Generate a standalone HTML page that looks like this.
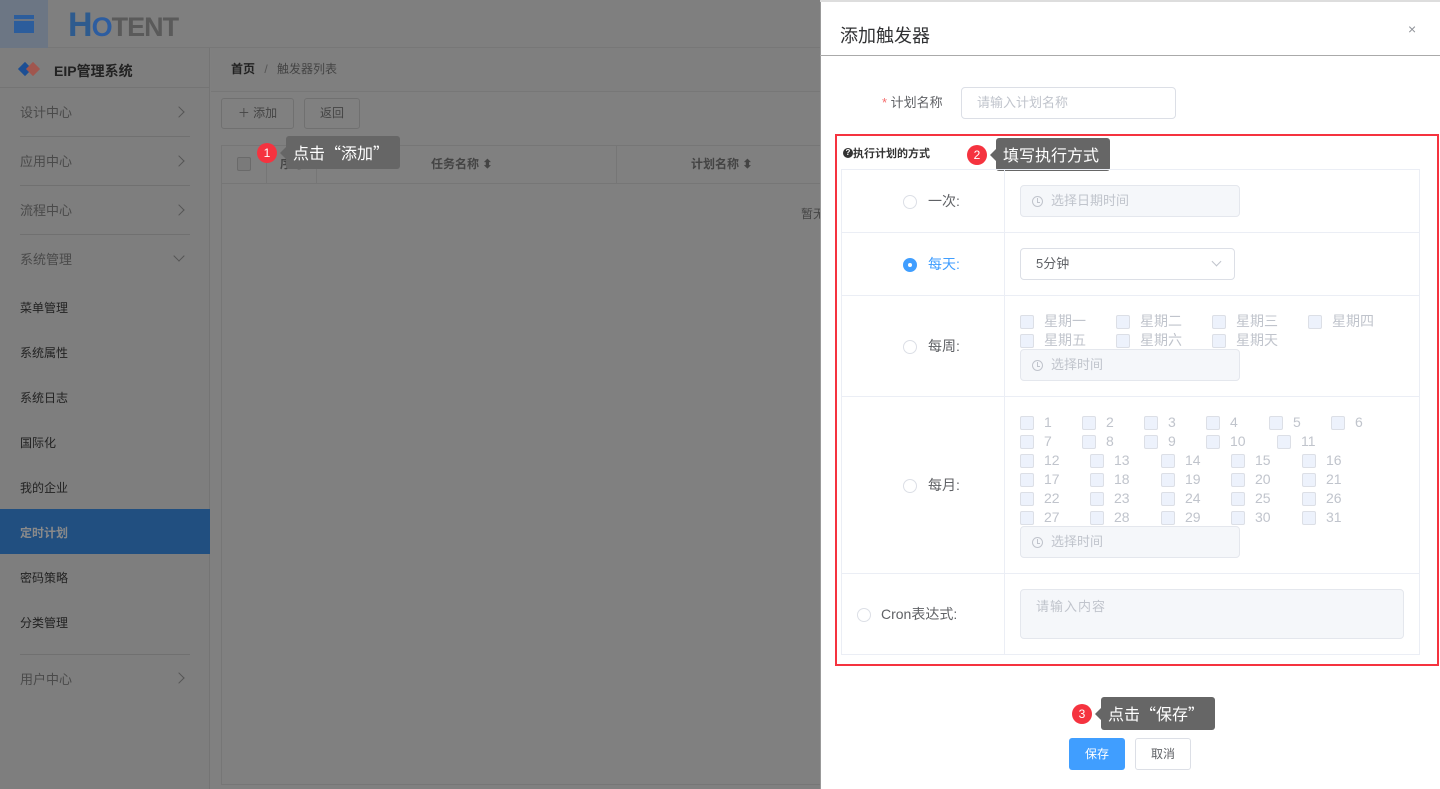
<!DOCTYPE html><html><head><meta charset="utf-8"><style>
*{box-sizing:border-box;margin:0;padding:0}
body{width:1440px;height:789px;overflow:hidden;position:relative;font-family:"Liberation Sans","Noto Sans CJK SC",sans-serif;font-size:13px;background:#808080;color:#333}
.a{position:absolute}
.mi{position:absolute;left:20px;font-size:13px;color:#4a4a4a}
.sub{position:absolute;left:20px;font-size:12px;color:#222}
.ln{position:absolute;left:20px;width:170px;height:1px;background:#707070}
.chev{position:absolute;left:175px;width:8px;height:8px;border-right:1.5px solid #555;border-top:1.5px solid #555;transform:rotate(45deg)}
.tip{position:absolute;background:#666;color:#fff;font-size:16px;border-radius:3px;padding:0 7px;line-height:33px;height:33px;font-family:"Noto Sans CJK SC",sans-serif;white-space:nowrap}
.tip:before{content:"";position:absolute;left:-6px;top:11px;border-right:6px solid #666;border-top:6px solid transparent;border-bottom:6px solid transparent}
.dot{position:absolute;width:20px;height:20px;border-radius:50%;background:#f5333f;color:#fff;font-size:12px;text-align:center;line-height:20px}
.radio{position:absolute;width:14px;height:14px;border-radius:50%;border:1px solid #dcdfe6;background:#fff}
.lbl{position:absolute;font-size:14px;color:#606266}
.inp{position:absolute;border:1px solid #e4e7ed;background:#f5f7fa;border-radius:4px;color:#c0c4cc;font-size:13px;padding-left:30px;line-height:30px;height:32px}
.inp .clk{position:absolute;left:11px;top:10px;width:11px;height:11px;border:1px solid #c0c4cc;border-radius:50%}
.inp .clk:after{content:"";position:absolute;left:4px;top:1px;width:2px;height:4px;border-left:1px solid #c0c4cc;border-bottom:1px solid #c0c4cc}
.cb{position:absolute;width:14px;height:14px;border:1px solid #dcdfe6;background:#edf2fc;border-radius:2px}
.ct{position:absolute;font-size:14px;color:#c0c4cc}
.hl{position:absolute;left:841px;width:579px;height:1px;background:#ebeef5}
</style></head><body>
<div class="a" style="left:0;top:0;width:820px;height:48px;background:#7f7f7f;border-bottom:1px solid #777"></div>
<div class="a" style="left:0;top:0;width:48px;height:48px;background:#6c7684"></div>
<div class="a" style="left:14px;top:15px;width:20px;height:18px;background:#2c5d9c;border-top:4px solid #2c5d9c"></div>
<div class="a" style="left:14px;top:19px;width:20px;height:2px;background:#6c7684"></div>
<div class="a" style="left:68px;top:6px;font-size:34px;font-weight:bold;color:#2e5b8e;letter-spacing:-1px">H<span style="font-size:27px;color:#2d5da0">O</span><span style="font-size:27px;color:#5a5a5a">TENT</span></div>
<div class="a" style="left:0;top:48px;width:210px;height:741px;background:#7e7e7e;border-right:1px solid #747474"></div>
<div class="a" style="left:0;top:48px;width:210px;height:40px;border-bottom:1px solid #747474"></div>
<div class="a" style="left:20px;top:64px;width:10px;height:10px;background:#1d4f94;transform:rotate(45deg)"></div>
<div class="a" style="left:28px;top:64px;width:10px;height:10px;background:#a0564e;transform:rotate(45deg)"></div>
<div class="a" style="left:54px;top:61px;font-size:14px;font-weight:bold;color:#222">EIP管理系统</div>
<div class="mi" style="top:102px">设计中心</div><div class="chev" style="top:108px"></div><div class="ln" style="top:136px"></div>
<div class="mi" style="top:151px">应用中心</div><div class="chev" style="top:157px"></div><div class="ln" style="top:185px"></div>
<div class="mi" style="top:200px">流程中心</div><div class="chev" style="top:206px"></div><div class="ln" style="top:234px"></div>
<div class="mi" style="top:249px">系统管理</div><div class="chev" style="top:252px;transform:rotate(135deg)"></div>
<div class="sub" style="top:299px">菜单管理</div>
<div class="sub" style="top:344px">系统属性</div>
<div class="sub" style="top:389px">系统日志</div>
<div class="sub" style="top:434px">国际化</div>
<div class="sub" style="top:479px">我的企业</div>
<div class="a" style="left:0;top:509px;width:210px;height:45px;background:#214f80"></div>
<div class="sub" style="top:524px;color:#8a8a8a;font-weight:bold">定时计划</div>
<div class="sub" style="top:569px">密码策略</div>
<div class="sub" style="top:614px">分类管理</div>
<div class="ln" style="top:654px"></div>
<div class="mi" style="top:669px">用户中心</div><div class="chev" style="top:674px"></div>
<div class="a" style="left:211px;top:48px;width:609px;height:44px;background:#7f7f7f;border-bottom:1px solid #777"></div>
<div class="a" style="left:231px;top:60px;font-size:12px;color:#222;font-weight:bold">首页 <span style="color:#555;font-weight:normal;margin:0 6px">/</span> <span style="font-weight:normal;color:#444">触发器列表</span></div>
<div class="a" style="left:221px;top:98px;width:73px;height:31px;border:1px solid #707070;border-radius:3px;color:#444;font-size:12px;line-height:29px;text-align:center">＋ 添加</div>
<div class="a" style="left:304px;top:98px;width:56px;height:31px;border:1px solid #707070;border-radius:3px;color:#444;font-size:12px;line-height:29px;text-align:center">返回</div>
<div class="a" style="left:221px;top:145px;width:600px;height:640px;border:1px solid #767676;border-right:none"></div>
<div class="a" style="left:221px;top:183px;width:600px;height:1px;background:#767676"></div>
<div class="a" style="left:266px;top:145px;width:1px;height:38px;background:#767676"></div>
<div class="a" style="left:316px;top:145px;width:1px;height:38px;background:#767676"></div>
<div class="a" style="left:616px;top:145px;width:1px;height:38px;background:#767676"></div>
<div class="a" style="left:237px;top:157px;width:14px;height:14px;border:1px solid #6a6a6a;background:#7a7a7a;border-radius:2px"></div>
<div class="a" style="left:280px;top:155px;font-size:12px;color:#444;font-weight:bold">序号</div>
<div class="a" style="left:431px;top:155px;font-size:12px;color:#444;font-weight:bold">任务名称 ⬍</div>
<div class="a" style="left:691px;top:155px;font-size:12px;color:#444;font-weight:bold">计划名称 ⬍</div>
<div class="a" style="left:801px;top:205px;font-size:12px;color:#444">暂无</div>
<div class="dot" style="left:257px;top:143px">1</div>
<div class="tip" style="left:286px;top:136px;width:114px">点击“添加”</div>
<div class="a" style="left:820px;top:0;width:620px;height:789px;background:#fff;border-left:1px solid #999"></div>
<div class="a" style="left:820px;top:0;width:620px;height:2px;background:#ddd"></div>
<div class="a" style="left:840px;top:22px;font-size:18px;color:#303133">添加触发器</div>
<div class="a" style="left:1408px;top:21px;font-size:14px;color:#909399">×</div>
<div class="a" style="left:820px;top:55px;width:620px;height:1px;background:#aaa"></div>
<div class="a" style="left:882px;top:92px;font-size:13px;color:#606266"><span style="color:#f56c6c">*</span> 计划名称</div>
<div class="a" style="left:961px;top:87px;width:215px;height:32px;border:1px solid #dcdfe6;border-radius:4px;color:#c0c4cc;font-size:13px;padding-left:15px;line-height:30px">请输入计划名称</div>
<div class="a" style="left:835px;top:134px;width:604px;height:532px;border:2px solid #f5333f"></div>
<div class="a" style="left:843px;top:148px;width:10px;height:10px;border-radius:50%;background:#333;color:#fff;font-size:8px;font-weight:bold;text-align:center;line-height:10px">?</div>
<div class="a" style="left:853px;top:145px;font-size:11px;font-weight:bold;color:#333">执行计划的方式</div>
<div class="dot" style="left:967px;top:145px">2</div>
<div class="tip" style="left:996px;top:138px;width:114px">填写执行方式</div>
<div class="a" style="left:841px;top:169px;width:579px;height:486px;border:1px solid #ebeef5"></div>
<div class="a" style="left:1004px;top:169px;width:1px;height:486px;background:#ebeef5"></div>
<div class="hl" style="top:232px"></div><div class="hl" style="top:295px"></div><div class="hl" style="top:396px"></div><div class="hl" style="top:573px"></div>
<div class="radio" style="left:903px;top:195px"></div><div class="lbl" style="left:928px;top:191px">一次:</div>
<div class="inp" style="left:1020px;top:185px;width:220px"><span class="clk"></span>选择日期时间</div>
<div class="radio" style="left:903px;top:258px;background:#409eff;border-color:#409eff"><div style="position:absolute;left:4px;top:4px;width:4px;height:4px;border-radius:50%;background:#fff"></div></div>
<div class="lbl" style="left:928px;top:254px;color:#409eff">每天:</div>
<div class="a" style="left:1020px;top:248px;width:215px;height:32px;border:1px solid #dcdfe6;border-radius:4px;font-size:13px;color:#606266;padding-left:15px;line-height:30px">5分钟<span style="position:absolute;right:14px;top:9px;width:7px;height:7px;border-right:1px solid #c0c4cc;border-bottom:1px solid #c0c4cc;transform:rotate(45deg)"></span></div>
<div class="radio" style="left:903px;top:340px"></div><div class="lbl" style="left:928px;top:336px">每周:</div>
<div class="cb" style="left:1020px;top:315px"></div><div class="ct" style="left:1044px;top:311px">星期一</div>
<div class="cb" style="left:1116px;top:315px"></div><div class="ct" style="left:1140px;top:311px">星期二</div>
<div class="cb" style="left:1212px;top:315px"></div><div class="ct" style="left:1236px;top:311px">星期三</div>
<div class="cb" style="left:1308px;top:315px"></div><div class="ct" style="left:1332px;top:311px">星期四</div>
<div class="cb" style="left:1020px;top:334px"></div><div class="ct" style="left:1044px;top:330px">星期五</div>
<div class="cb" style="left:1116px;top:334px"></div><div class="ct" style="left:1140px;top:330px">星期六</div>
<div class="cb" style="left:1212px;top:334px"></div><div class="ct" style="left:1236px;top:330px">星期天</div>
<div class="inp" style="left:1020px;top:349px;width:220px"><span class="clk"></span>选择时间</div>
<div class="radio" style="left:903px;top:479px"></div><div class="lbl" style="left:928px;top:475px">每月:</div>
<div id="days"></div>
<div class="inp" style="left:1020px;top:526px;width:220px"><span class="clk"></span>选择时间</div>
<div class="radio" style="left:857px;top:608px"></div><div class="lbl" style="left:881px;top:604px">Cron表达式:</div>
<div class="a" style="left:1020px;top:589px;width:384px;height:50px;border:1px solid #e4e7ed;background:#f5f7fa;border-radius:4px;color:#c0c4cc;font-size:13px;padding:6px 15px;letter-spacing:1px">请输入内容</div>
<div class="dot" style="left:1072px;top:704px">3</div>
<div class="tip" style="left:1101px;top:697px;width:114px">点击“保存”</div>
<div class="a" style="left:1069px;top:738px;width:56px;height:32px;background:#409eff;border-radius:3px;color:#fff;font-size:12px;text-align:center;line-height:32px">保存</div>
<div class="a" style="left:1135px;top:738px;width:56px;height:32px;border:1px solid #dcdfe6;border-radius:3px;color:#606266;font-size:12px;text-align:center;line-height:30px">取消</div>
<script>
var h='',rows=[[1,2,3,4,5,6],[7,8,9,10,11],[12,13,14,15,16],[17,18,19,20,21],[22,23,24,25,26],[27,28,29,30,31]];
var xs1=[1020,1082,1144,1206,1269,1331],xs2=[1020,1082,1144,1206,1277],xs3=[1020,1090,1161,1231,1302];
rows.forEach(function(r,i){var xs=i==0?xs1:(i==1?xs2:xs3);var y=416+i*19;r.forEach(function(d,j){h+='<div class="cb" style="left:'+xs[j]+'px;top:'+y+'px"></div><div class="ct" style="left:'+(xs[j]+24)+'px;top:'+(y-2)+'px">'+d+'</div>';});});
document.getElementById('days').innerHTML=h;
</script>
</body></html>
